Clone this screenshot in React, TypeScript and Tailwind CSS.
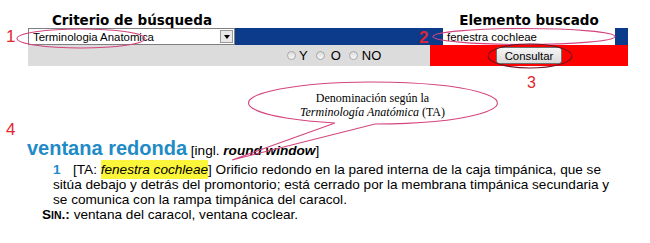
import React from "react";

function Radio() {
  return (
    <span className="inline-block w-[9px] h-[9px] rounded-full border border-[#a8a8a8] bg-gradient-to-b from-[#dcdcdc] to-[#f8f8f8]" />
  );
}

export default function App() {
  return (
    <div className="relative w-[650px] h-[243px] overflow-hidden bg-white font-['Liberation_Sans',Arial,sans-serif] text-black">
      {/* search form */}
      <div className="pl-[28px] pt-[12px]">
        <div className="flex w-[600px] h-[16px] font-['DejaVu_Sans',Verdana,sans-serif] font-bold text-[13.5px] leading-[16px]">
          <div className="w-[208px] text-center">Criterio de búsqueda</div>
          <div className="ml-auto w-[198px] text-center">Elemento buscado</div>
        </div>
        <div className="flex w-[600px] h-[17px] bg-[#0d3b8b]">
          <div className="w-[207px] h-full flex items-center bg-white border border-[#7f7f7f] pl-[4px] pr-[1px]">
            <span className="flex-1 text-[11.4px] leading-[14px] truncate">Terminologia Anatomica</span>
            <span className="w-[13px] h-[13px] flex items-center justify-center bg-[#e8e8e8] border border-[#9a9a9a]">
              <span className="block w-0 h-0 border-l-[3.5px] border-r-[3.5px] border-t-[4px] border-l-transparent border-r-transparent border-t-black" />
            </span>
          </div>
          <div className="ml-auto mr-[13px] w-[172px] h-full bg-white pl-[4px] flex items-center">
            <span className="text-[11.4px] leading-[14px]">fenestra cochleae</span>
          </div>
        </div>
        <div className="flex w-[600px] h-[21px]">
          <div className="w-[402px] h-full bg-[#dcdcdc] flex items-center pl-[259px] text-[13px]">
            <Radio />
            <span className="ml-[3px]">Y</span>
            <span className="ml-[8px]"><Radio /></span>
            <span className="ml-[6px]">O</span>
            <span className="ml-[8px]"><Radio /></span>
            <span className="ml-[4px]">NO</span>
          </div>
          <div className="flex-1 h-full bg-[#ff0000] flex items-center justify-center">
            <button className="w-[66px] h-[17px] rounded-[3px] border border-[#707070] bg-gradient-to-b from-[#f6f6f6] to-[#dadada] text-[11.4px] leading-[14px] text-black">
              Consultar
            </button>
          </div>
        </div>
      </div>

      {/* entry */}
      <div className="mt-[70px] pl-[27px]">
        <div className="h-[24px] leading-[24px] whitespace-nowrap">
          <span className="text-[20px] font-bold text-[#1f8bc6]">ventana redonda</span>
          <span className="text-[13.6px]"> [ingl. <b><i>round window</i></b>]</span>
        </div>
        <div className="pl-[26px] mt-[2px] text-[13.6px] leading-[15px] whitespace-nowrap">
          <div>
            <span className="inline-block w-[20px] font-bold text-[#1f8bc6]">1</span>
            [TA: <span className="bg-[#fbf63a] py-[2px] italic">fenestra cochleae</span>] Orificio redondo en la pared interna de la caja timpánica, que se
          </div>
          <div>sitúa debajo y detrás del promontorio; está cerrado por la membrana timpánica secundaria y</div>
          <div>se comunica con la rampa timpánica del caracol.</div>
        </div>
        <div className="pl-[15px] text-[13.6px] leading-[15px] whitespace-nowrap">
          <b>S<span className="text-[10.5px]">IN</span>.:</b> ventana del caracol, ventana coclear.
        </div>
      </div>

      {/* annotations */}
      <svg className="absolute left-0 top-0 w-[650px] h-[243px] pointer-events-none" viewBox="0 0 650 243">
        <ellipse cx="81" cy="38.5" rx="64" ry="9.5" fill="none" stroke="#d4457e" strokeWidth="1.1" />
        <ellipse cx="524" cy="36.5" rx="91" ry="8" fill="none" stroke="#d4457e" strokeWidth="1.1" />
        <ellipse cx="530" cy="56" rx="42" ry="12" fill="none" stroke="#6e1424" strokeWidth="1.1" />
        <path d="M335 123 L232 160 L375 124 A124.5 21 0 1 0 335 123" fill="none" stroke="#d4457e" strokeWidth="1.1" />
      </svg>
      <div className="absolute left-[248px] top-[91px] w-[249px] text-center font-['Liberation_Serif','Times_New_Roman',serif] text-[12px] leading-[14px]">
        <div>Denominación según la</div>
        <div><i>Terminología Anatómica</i> (TA)</div>
      </div>
      <div className="absolute left-[6px] top-[27px] text-[17px] leading-[20px] text-[#e0262e]">1</div>
      <div className="absolute left-[419px] top-[28px] text-[17px] leading-[20px] font-bold text-[#d8283a]">2</div>
      <div className="absolute left-[527px] top-[73px] text-[16px] leading-[19px] text-[#e0262e]">3</div>
      <div className="absolute left-[6px] top-[120px] text-[17px] leading-[20px] text-[#e0262e]">4</div>
    </div>
  );
}
